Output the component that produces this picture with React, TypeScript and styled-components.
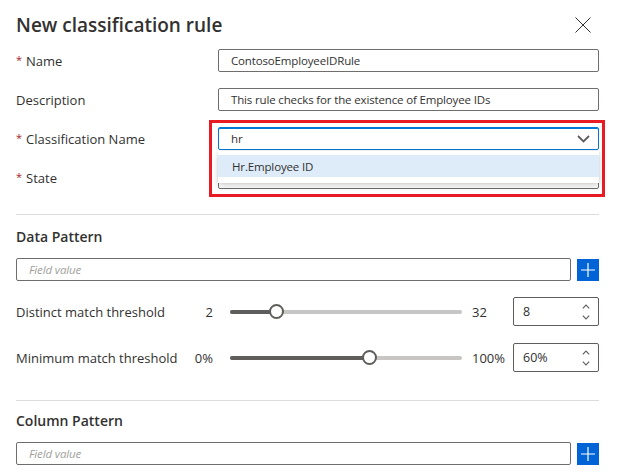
import React from "react";
import styled, { createGlobalStyle } from "styled-components";

const GlobalStyle = createGlobalStyle`
  html, body {
    margin: 0;
    padding: 0;
    background: #fff;
  }
  * {
    box-sizing: border-box;
  }
`;

const Panel = styled.div`
  width: 619px;
  height: 472px;
  overflow: hidden;
  padding: 0 20px 0 16px;
  background: #fff;
  color: #323130;
  font-family: "Open Sans", "Noto Sans", sans-serif;
  font-size: 13px;
`;

const Header = styled.div`
  height: 49px;
  display: flex;
  align-items: center;
  justify-content: space-between;
`;

const Title = styled.h1`
  margin: 0;
  font-size: 19px;
  font-weight: 600;
  line-height: 26px;
  color: #323130;
`;

const CloseButton = styled.button`
  width: 18px;
  height: 18px;
  margin-right: 7px;
  padding: 0;
  border: none;
  background: none;
  display: flex;
  align-items: center;
  justify-content: center;
  color: #323130;
`;

const Form = styled.div`
  display: grid;
  grid-template-columns: 202px 1fr;
  row-gap: 16px;
  align-items: center;
`;

const Label = styled.label`
  font-size: 13px;
  line-height: 20px;
  color: #323130;
`;

const Required = styled.span`
  color: #a4262c;
  font-size: 11px;
  margin-right: 4px;
  vertical-align: 2px;
`;

const Field = styled.div`
  position: relative;
`;

const TextBox = styled.div<{ $focused?: boolean }>`
  height: 23px;
  display: flex;
  align-items: center;
  justify-content: space-between;
  padding: 0 8px 0 12px;
  border: 1px solid ${(p) => (p.$focused ? "#0078d4" : "#6f6e6d")};
  ${(p) => (p.$focused ? "box-shadow: inset 0 1px 0 #0078d4;" : "")}
  border-radius: 2px;
  background: #fff;
  font-size: 11.5px;
  letter-spacing: -0.15px;
  color: #323130;
  white-space: nowrap;
`;

const Placeholder = styled.span`
  font-style: italic;
  color: #a19f9d;
`;

const Popup = styled.div`
  position: absolute;
  top: calc(100% + 1px);
  left: 0;
  right: 0;
  z-index: 2;
  padding: 4px 0 6px;
  background: #fff;
  box-shadow: 0 3px 7px rgba(0, 0, 0, 0.16), 0 0 2px rgba(0, 0, 0, 0.12);
`;

const Option = styled.div`
  height: 22px;
  display: flex;
  align-items: center;
  padding-left: 14px;
  background: #deecf9;
  color: #323130;
  font-size: 11.5px;
  letter-spacing: -0.15px;
`;

const Highlight = styled.div`
  position: absolute;
  left: -9px;
  right: -6px;
  top: -7px;
  height: 77px;
  border: 3px solid #e81a24;
  z-index: 3;
  pointer-events: none;
`;

const Divider = styled.hr<{ $top: number }>`
  margin: ${(p) => p.$top}px 0 0;
  border: none;
  border-top: 1px solid #dcdcdc;
`;

const SectionTitle = styled.h2<{ $top: number }>`
  margin: ${(p) => p.$top}px 0 11px;
  font-size: 14px;
  font-weight: 600;
  line-height: 20px;
  color: #323130;
`;

const AddRow = styled.div`
  display: grid;
  grid-template-columns: 1fr 22px;
  column-gap: 6px;
  align-items: center;
`;

const AddButton = styled.button`
  width: 22px;
  height: 22px;
  padding: 0;
  border: none;
  background: #0064d6;
  display: flex;
  align-items: center;
  justify-content: center;
`;

const SliderRow = styled.div<{ $top: number }>`
  display: grid;
  grid-template-columns: 1fr auto 232px 51px 86px;
  align-items: center;
  margin-top: ${(p) => p.$top}px;
`;

const MinValue = styled.span`
  margin-right: 17px;
  text-align: right;
`;

const MaxValue = styled.span`
  padding-left: 10px;
`;

const Track = styled.div`
  position: relative;
  height: 4px;
  border-radius: 2px;
  background: #c8c6c4;
`;

const Fill = styled.div`
  height: 100%;
  border-radius: 2px;
  background: #605e5c;
`;

const Thumb = styled.div`
  position: absolute;
  top: 50%;
  width: 15px;
  height: 15px;
  margin: -7.5px 0 0 -7.5px;
  border: 2px solid #605e5c;
  border-radius: 50%;
  background: #fff;
`;

const Spinner = styled.div`
  height: 29px;
  display: flex;
  align-items: center;
  justify-content: space-between;
  padding: 0 8px 0 9px;
  border: 1px solid #605e5c;
  border-radius: 2px;
  font-size: 12.5px;
`;

const Arrows = styled.div`
  display: flex;
  flex-direction: column;
  gap: 6px;
  color: #605e5c;
`;

const Chevron = ({ up }: { up?: boolean }) => (
  <svg width="8" height="5" viewBox="0 0 8 5" fill="none">
    <path
      d={up ? "M0.8 4.3 L4 1 L7.2 4.3" : "M0.8 0.7 L4 4 L7.2 0.7"}
      stroke="currentColor"
      strokeWidth="1.1"
    />
  </svg>
);

const PlusIcon = () => (
  <svg width="14" height="14" viewBox="0 0 14 14">
    <path d="M7 0 V14 M0 7 H14" stroke="#fff" strokeWidth="1.2" />
  </svg>
);

interface SliderProps {
  label: string;
  min: string;
  max: string;
  value: string;
  pct: number;
  top: number;
}

function SliderField({ label, min, max, value, pct, top }: SliderProps) {
  return (
    <SliderRow $top={top}>
      <Label>{label}</Label>
      <MinValue>{min}</MinValue>
      <Track>
        <Fill style={{ width: `${pct}%` }} />
        <Thumb style={{ left: `${pct}%` }} />
      </Track>
      <MaxValue>{max}</MaxValue>
      <Spinner>
        <span>{value}</span>
        <Arrows>
          <Chevron up />
          <Chevron />
        </Arrows>
      </Spinner>
    </SliderRow>
  );
}

export default function App() {
  return (
    <>
      <GlobalStyle />
      <Panel>
        <Header>
          <Title>New classification rule</Title>
          <CloseButton aria-label="Close">
            <svg width="16" height="16" viewBox="0 0 16 16">
              <path d="M0.5 0.5 L15.5 15.5 M15.5 0.5 L0.5 15.5" stroke="#323130" strokeWidth="1" />
            </svg>
          </CloseButton>
        </Header>

        <Form>
          <Label>
            <Required>*</Required>Name
          </Label>
          <TextBox>ContosoEmployeeIDRule</TextBox>

          <Label>Description</Label>
          <TextBox>This rule checks for the existence of Employee IDs</TextBox>

          <Label>
            <Required>*</Required>Classification Name
          </Label>
          <Field>
            <TextBox $focused>
              <span>hr</span>
              <svg width="13" height="8" viewBox="0 0 13 8" fill="none">
                <path d="M1 1 L6.5 6.5 L12 1" stroke="#605e5c" strokeWidth="1.8" />
              </svg>
            </TextBox>
            <Popup>
              <Option>Hr.Employee ID</Option>
            </Popup>
            <Highlight />
          </Field>

          <Label>
            <Required>*</Required>State
          </Label>
          <TextBox />
        </Form>

        <Divider $top={25} />
        <SectionTitle $top={12}>Data Pattern</SectionTitle>
        <AddRow>
          <TextBox>
            <Placeholder>Field value</Placeholder>
          </TextBox>
          <AddButton aria-label="Add">
            <PlusIcon />
          </AddButton>
        </AddRow>

        <SliderField label="Distinct match threshold" min="2" max="32" value="8" pct={20} top={16} />
        <SliderField label="Minimum match threshold" min="0%" max="100%" value="60%" pct={60} top={17} />

        <Divider $top={28} />
        <SectionTitle $top={10}>Column Pattern</SectionTitle>
        <AddRow>
          <TextBox>
            <Placeholder>Field value</Placeholder>
          </TextBox>
          <AddButton aria-label="Add">
            <PlusIcon />
          </AddButton>
        </AddRow>
      </Panel>
    </>
  );
}
